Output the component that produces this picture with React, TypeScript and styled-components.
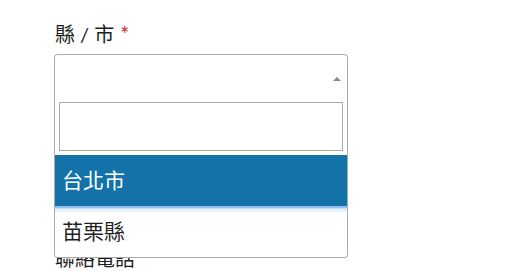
import styled, { createGlobalStyle } from 'styled-components';

const GlobalStyle = createGlobalStyle`
  html, body {
    margin: 0;
    padding: 0;
    background: #fff;
  }
  body {
    font-family: 'Lato', 'Noto Sans CJK TC', sans-serif;
    color: #222;
  }
`;

const cities = ['台北市', '苗栗縣'];

export default function App() {
  return (
    <>
      <GlobalStyle />
      <Form>
        <Field>
          <Label>
            縣 / 市<Required>*</Required>
          </Label>
          <SelectWrapper>
            <Selection>
              <Arrow />
            </Selection>
            <Dropdown>
              <SearchBox>
                <SearchInput type="text" />
              </SearchBox>
              <OptionList>
                {cities.map((city, idx) => (
                  <Option key={city} $highlighted={idx === 0} $afterHighlight={idx === 1}>
                    {city}
                  </Option>
                ))}
              </OptionList>
            </Dropdown>
          </SelectWrapper>
        </Field>
        <Field>
          <Label>聯絡電話</Label>
        </Field>
      </Form>
    </>
  );
}

const Form = styled.div`
  display: flex;
  flex-direction: column;
  padding: 20px 0 0 54px;
  width: 294px;
`;

const Field = styled.div`
  display: flex;
  flex-direction: column;
  gap: 6px;
  margin-bottom: 146px;
`;

const Label = styled.label`
  font-size: 20px;
  line-height: 28px;
  padding-left: 1px;
  color: #1e1e1e;
`;

const Required = styled.span`
  color: #c8262e;
  font-size: 21px;
  margin-left: 6px;
`;

const SelectWrapper = styled.div`
  position: relative;
  width: 294px;
`;

const Selection = styled.div`
  box-sizing: border-box;
  height: 44px;
  border: 1px solid #aaa;
  border-bottom: none;
  border-radius: 4px 4px 0 0;
  display: flex;
  justify-content: flex-end;
  align-items: center;
  padding: 4px 6px 0 0;
`;

const Arrow = styled.span`
  width: 0;
  height: 0;
  border-style: solid;
  border-width: 0 4px 4px 4px;
  border-color: transparent transparent #888 transparent;
`;

const Dropdown = styled.div`
  position: absolute;
  top: 44px;
  left: 0;
  right: 0;
  z-index: 10;
  background: #fff;
  border: 1px solid #aaa;
  border-top: none;
  border-radius: 0 0 4px 4px;
  overflow: hidden;
`;

const SearchBox = styled.div`
  padding: 4px;
`;

const SearchInput = styled.input`
  box-sizing: border-box;
  display: block;
  width: 100%;
  height: 49px;
  border: 1px solid #aaa;
  border-radius: 0;
  outline: none;
  margin: 0;
  font-size: 18px;
`;

const OptionList = styled.ul`
  list-style: none;
  margin: 0;
  padding: 0;
`;

const Option = styled.li<{ $highlighted: boolean; $afterHighlight: boolean }>`
  box-sizing: border-box;
  height: 51px;
  display: flex;
  align-items: center;
  padding: 0 7px 3px;
  font-size: 21px;
  color: ${({ $highlighted }) => ($highlighted ? '#fff' : '#1e1e1e')};
  background: ${({ $highlighted, $afterHighlight }) =>
    $highlighted
      ? '#1373a8'
      : $afterHighlight
        ? 'linear-gradient(#8fc0ef 0 2px, #c6e0f8 2px 3px, #e8f2fc 3px 6px, #fff 6px)'
        : '#fff'};
`;
